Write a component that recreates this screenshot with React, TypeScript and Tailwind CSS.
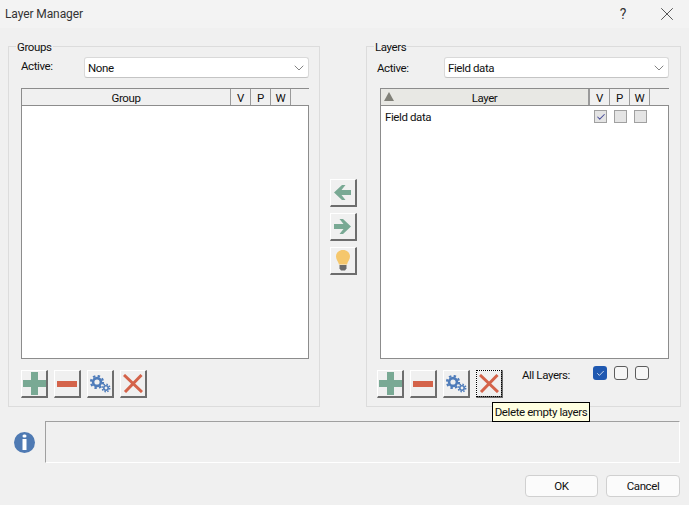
import type { ReactNode } from 'react'
import { ChevronDown, Check, X } from 'lucide-react'

/* ── Toolbar icons ── */
function PlusIcon() {
  return (
    <svg width="23" height="23" viewBox="0 0 23 23">
      <path d="M8 0h7v8h8v7h-8v8H8v-8H0V8h8z" fill="#79a994" />
    </svg>
  )
}

function MinusIcon() {
  return (
    <svg width="20" height="6" viewBox="0 0 20 6">
      <rect width="20" height="6" fill="#d4634a" />
    </svg>
  )
}

function GearsIcon() {
  return (
    <svg width="21" height="18" viewBox="0 0 21 18" fill="none" stroke="#4f7cba">
      <circle cx="7" cy="7" r="3.9" strokeWidth="2.6" />
      <circle cx="7" cy="7" r="6" strokeWidth="2.2" strokeDasharray="2.4 2.3" />
      <circle cx="16" cy="13" r="2.2" strokeWidth="1.6" />
      <circle cx="16" cy="13" r="3.7" strokeWidth="1.5" strokeDasharray="1.5 1.4" />
    </svg>
  )
}

function CrossIcon() {
  return (
    <svg width="20" height="19" viewBox="0 0 20 19" fill="none" stroke="#d4634a" strokeWidth="3">
      <path d="M1 1l18 17M18.5 1L2 18" />
    </svg>
  )
}

function ArrowLeftIcon() {
  return (
    <svg width="17" height="15" viewBox="0 0 17 15">
      <path d="M8 0h3.5L7.5 5H17v5H7.5l4 5H8L0 7.5z" fill="#79a994" />
    </svg>
  )
}

function ArrowRightIcon() {
  return (
    <svg width="17" height="15" viewBox="0 0 17 15">
      <path d="M9 0H5.5l4 5H0v5h9.5l-4 5H9l8-7.5z" fill="#79a994" />
    </svg>
  )
}

function BulbIcon() {
  return (
    <svg width="14" height="21" viewBox="0 0 14 21">
      <path d="M7 0c3.9 0 7 2.8 7 6.4 0 3-2.2 4.7-3 8.1H3C2.2 11.1 0 9.4 0 6.4 0 2.8 3.1 0 7 0z" fill="#f5c76c" />
      <path d="M3.5 15h7v3.5L9 20.5H5l-1.5-2z" fill="#6b6b6b" />
    </svg>
  )
}

function InfoIcon() {
  return (
    <svg width="21" height="21" viewBox="0 0 21 21">
      <circle cx="10.5" cy="10.5" r="10.5" fill="#4f7ab3" />
      <rect x="8.5" y="2.5" width="4" height="3" rx="1.5" fill="#fff" />
      <rect x="8.5" y="7" width="4" height="11" fill="#fff" />
    </svg>
  )
}

/* ── Small controls ── */
function BevelButton({ children, focused }: { children: ReactNode; focused?: boolean }) {
  return (
    <button className="relative flex h-[28px] w-[27px] items-center justify-center border-t border-l border-t-white border-l-white border-r-2 border-b-2 border-r-[#6d6d6d] border-b-[#6d6d6d] bg-[#f0f0f0]">
      {children}
      {focused && <span className="absolute -inset-px border border-dotted border-black" />}
    </button>
  )
}

function Combo({ value, width }: { value: string; width: string }) {
  return (
    <div className={`flex h-[21px] items-center justify-between rounded-[3px] border border-[#d9d9d9] border-b-[#c4c4c4] bg-white pr-[1px] pl-[3px] ${width}`}>
      <span className="pt-px">{value}</span>
      <ChevronDown size={16} strokeWidth={1} color="#444" />
    </div>
  )
}

function GridCheck({ checked }: { checked?: boolean }) {
  return (
    <span className="flex size-[13px] items-center justify-center border border-[#a0a0a0] bg-[#e4e4e4]">
      {checked && <Check size={10} strokeWidth={2.5} color="#4a4f9a" />}
    </span>
  )
}

function RoundCheck({ checked }: { checked?: boolean }) {
  return (
    <span
      className={
        checked
          ? 'flex size-[14px] items-center justify-center rounded-[3px] bg-[#1f58b0]'
          : 'size-[14px] rounded-[3px] border border-[#5c5c5c] bg-[#f6f6f6]'
      }
    >
      {checked && <Check size={9} strokeWidth={2} color="#fff" />}
    </span>
  )
}

function HeaderCell({ label, className }: { label: ReactNode; className: string }) {
  return (
    <div className={`relative flex h-full items-center justify-center border-r border-r-[#9a9a9a] pt-px ${className}`}>
      {label}
    </div>
  )
}

/* ── Grid list ── */
function GridList({ title, sorted, children }: { title: string; sorted?: boolean; children?: ReactNode }) {
  return (
    <div className="flex h-[271px] flex-col border border-[#8c8c8c] bg-white">
      <div className="-mr-px flex h-[17px] shrink-0 items-center border-b border-b-[#8c8c8c] bg-[#f0f0f0]">
        <HeaderCell
          className={sorted ? 'w-[209px] border-r-2 bg-[#e8e8e4]' : 'w-[209px]'}
          label={
            <>
              {sorted && (
                <span className="absolute left-[3px] top-[3px] h-0 w-0 border-x-[5px] border-b-[9px] border-x-transparent border-b-[#808078]" />
              )}
              {title}
            </>
          }
        />
        <HeaderCell className="w-[20px]" label="V" />
        <HeaderCell className="w-[20px]" label="P" />
        <HeaderCell className="w-[20px]" label="W" />
      </div>
      {children}
    </div>
  )
}

function Toolbar({ focusLast }: { focusLast?: boolean }) {
  return (
    <div className="flex gap-[6px]">
      <BevelButton><PlusIcon /></BevelButton>
      <BevelButton><MinusIcon /></BevelButton>
      <BevelButton><GearsIcon /></BevelButton>
      <BevelButton focused={focusLast}><CrossIcon /></BevelButton>
    </div>
  )
}

/* ── Main component ── */
export default function App() {
  return (
    <div className="relative flex h-[505px] w-[689px] flex-col overflow-hidden bg-[#f0f0f0] font-['Roboto',sans-serif] text-[11.5px] leading-[16px] tracking-[-0.4px] text-[#111]">
      {/* Title bar */}
      <div className="flex h-[28px] shrink-0 items-center justify-between bg-[#f3f3f3] pl-[5px] pr-[11px]">
        <span className="text-[12px] tracking-[-0.1px] text-[#333]">Layer Manager</span>
        <div className="flex items-center gap-[30px]">
          <span className="text-[14px] text-[#333]">?</span>
          <X size={22} strokeWidth={0.9} color="#333" />
        </div>
      </div>

      {/* Panels */}
      <div className="flex px-[8px] pt-[10px]">
        <fieldset className="h-[369px] w-[312px] border border-[#dcdcdc] pl-[12px] pr-[10px]">
          <legend className="ml-[-5px] translate-y-px px-[1px]">Groups</legend>
          <div className="mt-[3px] flex items-start">
            <span className="mt-px w-[63px]">Active:</span>
            <Combo value="None" width="w-[225px]" />
          </div>
          <div className="mt-[10px]"><GridList title="Group" /></div>
          <div className="mt-[11px]"><Toolbar /></div>
        </fieldset>

        <div className="flex w-[46px] flex-col items-center gap-[6px] pt-[141px]">
          <BevelButton><ArrowLeftIcon /></BevelButton>
          <BevelButton><ArrowRightIcon /></BevelButton>
          <BevelButton><BulbIcon /></BevelButton>
        </div>

        <fieldset className="h-[369px] w-[314px] border border-[#dcdcdc] pl-[10px] pr-[11px]">
          <legend className="ml-[-3px] translate-y-px px-[1px]">Layers</legend>
          <div className="mt-[3px] flex items-start">
            <span className="mt-[3px] w-[67px]">Active:</span>
            <Combo value="Field data" width="w-[225px]" />
          </div>
          <div className="mt-[10px] ml-[3px]">
            <GridList title="Layer" sorted>
              <div className="flex h-[21px] items-center pl-[4px]">
                <span className="w-[209px] pt-px">Field data</span>
                <div className="flex gap-[7px]">
                  <GridCheck checked />
                  <GridCheck />
                  <GridCheck />
                </div>
              </div>
            </GridList>
          </div>
          <div className="mt-[11px] flex items-start">
            <Toolbar focusLast />
            <span className="ml-[19px] mt-[-4px] w-[71px] translate-y-[1px]">All Layers:</span>
            <div className="mt-[-4px] flex gap-[7px]">
              <RoundCheck checked />
              <RoundCheck />
              <RoundCheck />
            </div>
          </div>
        </fieldset>
      </div>

      {/* Status line */}
      <div className="mt-[14px] flex items-center px-[9px]">
        <div className="flex w-[36px] justify-center pr-[6px]"><InfoIcon /></div>
        <div className="h-[42px] w-[635px] border border-[#a0a0a0] border-r-white border-b-white" />
      </div>

      {/* Dialog buttons */}
      <div className="mt-[12px] flex justify-end gap-[8px] pr-[9px]">
        <button className="h-[22px] w-[73px] rounded-[4px] border border-[#d0d0d0] bg-[#fbfbfb]">OK</button>
        <button className="h-[22px] w-[74px] rounded-[4px] border border-[#d0d0d0] bg-[#fbfbfb]">Cancel</button>
      </div>

      {/* Tooltip */}
      <div className="absolute left-[492px] top-[402px] flex h-[20px] w-[98px] items-center justify-center whitespace-nowrap border border-black bg-[#ffffe1]">
        Delete empty layers
      </div>
    </div>
  )
}
